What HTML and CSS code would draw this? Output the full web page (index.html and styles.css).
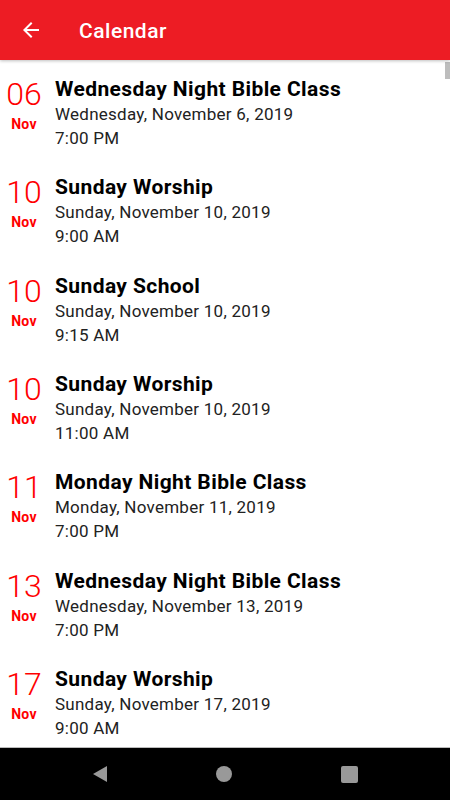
FILE: index.html
```html
<!DOCTYPE html>
<html lang="en">
<head>
    <meta charset="UTF-8">
    <meta name="viewport" content="width=device-width, initial-scale=1.0">
    <title>Calendar</title>
    <link rel="stylesheet" href="styles.css">
</head>
<body>
    <div class="app">
        <header class="toolbar">
            <svg class="back-icon" viewBox="0 0 24 24" width="24" height="24">
                <path d="M20 11H7.83l5.59-5.59L12 4l-8 8 8 8 1.41-1.41L7.83 13H20v-2z" fill="#fff"/>
            </svg>
            <h1 class="toolbar-title">Calendar</h1>
        </header>

        <main class="event-list">
            <div class="scroll-thumb"></div>

            <div class="event">
                <div class="event-date">
                    <div class="day">06</div>
                    <div class="month">Nov</div>
                </div>
                <div class="event-info">
                    <div class="event-title">Wednesday Night Bible Class</div>
                    <div class="event-detail">Wednesday, November 6, 2019</div>
                    <div class="event-detail">7:00 PM</div>
                </div>
            </div>

            <div class="event">
                <div class="event-date">
                    <div class="day">10</div>
                    <div class="month">Nov</div>
                </div>
                <div class="event-info">
                    <div class="event-title">Sunday Worship</div>
                    <div class="event-detail">Sunday, November 10, 2019</div>
                    <div class="event-detail">9:00 AM</div>
                </div>
            </div>

            <div class="event">
                <div class="event-date">
                    <div class="day">10</div>
                    <div class="month">Nov</div>
                </div>
                <div class="event-info">
                    <div class="event-title">Sunday School</div>
                    <div class="event-detail">Sunday, November 10, 2019</div>
                    <div class="event-detail">9:15 AM</div>
                </div>
            </div>

            <div class="event">
                <div class="event-date">
                    <div class="day">10</div>
                    <div class="month">Nov</div>
                </div>
                <div class="event-info">
                    <div class="event-title">Sunday Worship</div>
                    <div class="event-detail">Sunday, November 10, 2019</div>
                    <div class="event-detail">11:00 AM</div>
                </div>
            </div>

            <div class="event">
                <div class="event-date">
                    <div class="day">11</div>
                    <div class="month">Nov</div>
                </div>
                <div class="event-info">
                    <div class="event-title">Monday Night Bible Class</div>
                    <div class="event-detail">Monday, November 11, 2019</div>
                    <div class="event-detail">7:00 PM</div>
                </div>
            </div>

            <div class="event">
                <div class="event-date">
                    <div class="day">13</div>
                    <div class="month">Nov</div>
                </div>
                <div class="event-info">
                    <div class="event-title">Wednesday Night Bible Class</div>
                    <div class="event-detail">Wednesday, November 13, 2019</div>
                    <div class="event-detail">7:00 PM</div>
                </div>
            </div>

            <div class="event">
                <div class="event-date">
                    <div class="day">17</div>
                    <div class="month">Nov</div>
                </div>
                <div class="event-info">
                    <div class="event-title">Sunday Worship</div>
                    <div class="event-detail">Sunday, November 17, 2019</div>
                    <div class="event-detail">9:00 AM</div>
                </div>
            </div>
        </main>

        <nav class="nav-bar">
            <svg viewBox="0 0 16 18" width="16" height="18">
                <path d="M15 1v16L1 9z" fill="#999"/>
            </svg>
            <svg viewBox="0 0 16 16" width="16" height="16">
                <circle cx="8" cy="8" r="8" fill="#999"/>
            </svg>
            <svg viewBox="0 0 17 17" width="17" height="17">
                <rect x="0" y="0" width="17" height="17" rx="2" fill="#999"/>
            </svg>
        </nav>
    </div>
</body>
</html>
```

FILE: styles.css
```css
body {
    margin: 0;
    font-family: Roboto, "Liberation Sans", sans-serif;
    background: #fff;
}

.app {
    width: 450px;
    height: 800px;
    display: flex;
    flex-direction: column;
    overflow: hidden;
}

.toolbar {
    height: 60px;
    flex-shrink: 0;
    background-color: #ed1c24;
    display: flex;
    align-items: center;
    padding-left: 19px;
    box-shadow: 0 1px 3px rgba(0, 0, 0, 0.25);
    position: relative;
    z-index: 1;
}

.back-icon {
    display: block;
}

.toolbar-title {
    margin: 2px 0 0 36px;
    color: #fff;
    font-size: 21px;
    font-weight: 500;
    letter-spacing: 0.5px;
    line-height: 24px;
}

.event-list {
    flex: 1;
    position: relative;
    overflow: hidden;
    padding-top: 1px;
}

.scroll-thumb {
    position: absolute;
    right: 0;
    top: 2px;
    width: 5px;
    height: 17px;
    background: #bdbdbd;
}

.event {
    height: 98.33px;
    box-sizing: border-box;
    padding-top: 15px;
    display: flex;
}

.event-date {
    width: 48px;
    text-align: center;
    color: #f00;
}

.day {
    font-size: 32px;
    font-weight: 300;
    line-height: 37px;
}

.month {
    margin-top: 2px;
    font-size: 14px;
    font-weight: 700;
    letter-spacing: 0.3px;
    line-height: 18px;
}

.event-info {
    margin-left: 7px;
}

.event-title {
    font-size: 21px;
    font-weight: 700;
    letter-spacing: 0.4px;
    line-height: 26px;
    color: #000;
}

.event-detail {
    font-size: 17px;
    letter-spacing: 0.25px;
    line-height: 24px;
    color: #222;
}

.nav-bar {
    height: 52px;
    flex-shrink: 0;
    background: #000;
    border-top: 1px solid #bbb;
    display: flex;
    align-items: center;
    justify-content: space-around;
    padding: 0 38px;
}

.nav-bar svg {
    display: block;
}
```
